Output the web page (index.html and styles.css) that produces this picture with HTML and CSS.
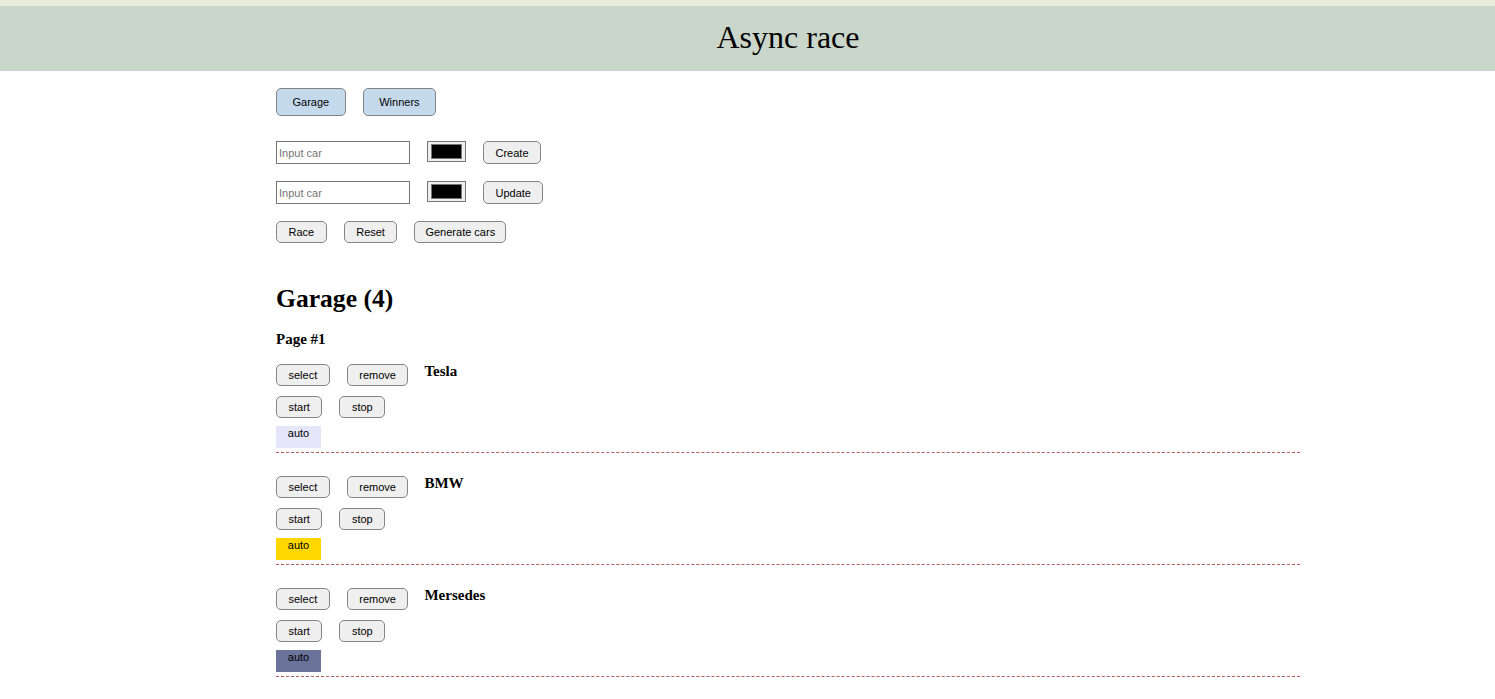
FILE: index.html
```html
<!DOCTYPE html>
<html lang="en">
<head>
<meta charset="utf-8">
<title>Async race</title>
<link rel="stylesheet" href="styles.css">
</head>
<body>
<div class="top-stripe"></div>
<header class="header">
  <div class="wrap"><h1 class="title">Async race</h1></div>
</header>
<main class="wrap main">
  <nav class="nav">
    <button class="btn nav-btn">Garage</button>
    <button class="btn nav-btn">Winners</button>
  </nav>
  <div class="form-row">
    <input class="text-input" type="text" placeholder="Input car">
    <input class="color-input" type="color" value="#000000">
    <button class="btn btn-tall">Create</button>
  </div>
  <div class="form-row">
    <input class="text-input" type="text" placeholder="Input car">
    <input class="color-input" type="color" value="#000000">
    <button class="btn btn-tall">Update</button>
  </div>
  <div class="form-row controls">
    <button class="btn">Race</button>
    <button class="btn">Reset</button>
    <button class="btn btn-gen">Generate cars</button>
  </div>
  <h2 class="garage-title">Garage (4)</h2>
  <h3 class="page-title">Page #1</h3>
  <section class="cars">
    <div class="car">
      <div class="car-row">
        <button class="btn">select</button>
        <button class="btn">remove</button>
        <span class="car-name">Tesla</span>
      </div>
      <div class="car-row">
        <button class="btn">start</button>
        <button class="btn">stop</button>
      </div>
      <div class="auto" style="background:#e6e6fa">auto</div>
    </div>
    <div class="car">
      <div class="car-row">
        <button class="btn">select</button>
        <button class="btn">remove</button>
        <span class="car-name">BMW</span>
      </div>
      <div class="car-row">
        <button class="btn">start</button>
        <button class="btn">stop</button>
      </div>
      <div class="auto" style="background:#ffd700">auto</div>
    </div>
    <div class="car">
      <div class="car-row">
        <button class="btn">select</button>
        <button class="btn">remove</button>
        <span class="car-name">Mersedes</span>
      </div>
      <div class="car-row">
        <button class="btn">start</button>
        <button class="btn">stop</button>
      </div>
      <div class="auto" style="background:#6b739a">auto</div>
    </div>
  </section>
</main>
</body>
</html>
```
FILE: styles.css
```css
html, body {
  margin: 0;
  padding: 0;
  background: #ffffff;
  font-family: "Liberation Serif", "Times New Roman", serif;
  color: #000;
}

.top-stripe {
  height: 6px;
  background: #e8ebd8;
}

.header {
  height: 65px;
  background: #cbd6ca;
}

.wrap {
  width: 1024px;
  margin-left: 276px;
}

.title {
  margin: 0;
  padding-top: 13px;
  text-align: center;
  font-weight: normal;
  font-size: 32px;
  line-height: 37px;
}

.main {
  padding-top: 17px;
}

.btn {
  font-family: "Liberation Sans", Arial, sans-serif;
  font-size: 11px;
  color: #000;
  background: #efefef;
  border: 1px solid #858585;
  border-radius: 5px;
  height: 22px;
  padding: 0 11.5px;
  margin: 0;
  box-sizing: border-box;
  line-height: 20px;
}

.btn-tall {
  height: 23px;
}

.btn-gen {
  padding: 0 10px;
}

.nav {
  display: flex;
  gap: 17px;
}

.nav .nav-btn {
  background: #c5d9ec;
  height: 28px;
  padding: 0 15.5px;
}

.form-row {
  display: flex;
  align-items: flex-start;
  gap: 17px;
  margin-top: 17px;
}

.nav + .form-row {
  margin-top: 25px;
}

.text-input {
  width: 134px;
  height: 23px;
  box-sizing: border-box;
  border: 1px solid #767676;
  margin: 0;
  padding: 0 2px;
  font-family: "Liberation Sans", Arial, sans-serif;
  font-size: 11px;
}

.text-input::placeholder {
  color: #767676;
}

.color-input {
  width: 39px;
  height: 21px;
  box-sizing: border-box;
  margin: 0;
  padding: 2px 3px;
  border: 1px solid #767676;
  background: #efefef;
}

.color-input::-webkit-color-swatch-wrapper {
  padding: 0;
}

.color-input::-webkit-color-swatch {
  border: 1px solid #777;
}

.garage-title {
  margin: 41px 0 0;
  font-size: 25.6px;
  line-height: 29px;
  font-weight: bold;
}

.page-title {
  margin: 18px 0 0;
  font-size: 15px;
  line-height: 17px;
  font-weight: bold;
}

.car {
  padding-top: 16px;
  padding-bottom: 4px;
  border-bottom: 1px dashed #b25c5c;
}

.car + .car {
  padding-top: 23px;
}

.car-row {
  display: flex;
  align-items: flex-start;
  gap: 17px;
}

.car-row + .car-row {
  margin-top: 10px;
}

.car-name {
  margin-left: -1px;
  margin-top: -1px;
  font-size: 15px;
  font-weight: bold;
  line-height: 17px;
}

.auto {
  margin-top: 8px;
  width: 45px;
  height: 22px;
  box-sizing: border-box;
  padding-top: 1px;
  text-align: center;
  font-family: "Liberation Sans", Arial, sans-serif;
  font-size: 11px;
  line-height: 12px;
}
```
